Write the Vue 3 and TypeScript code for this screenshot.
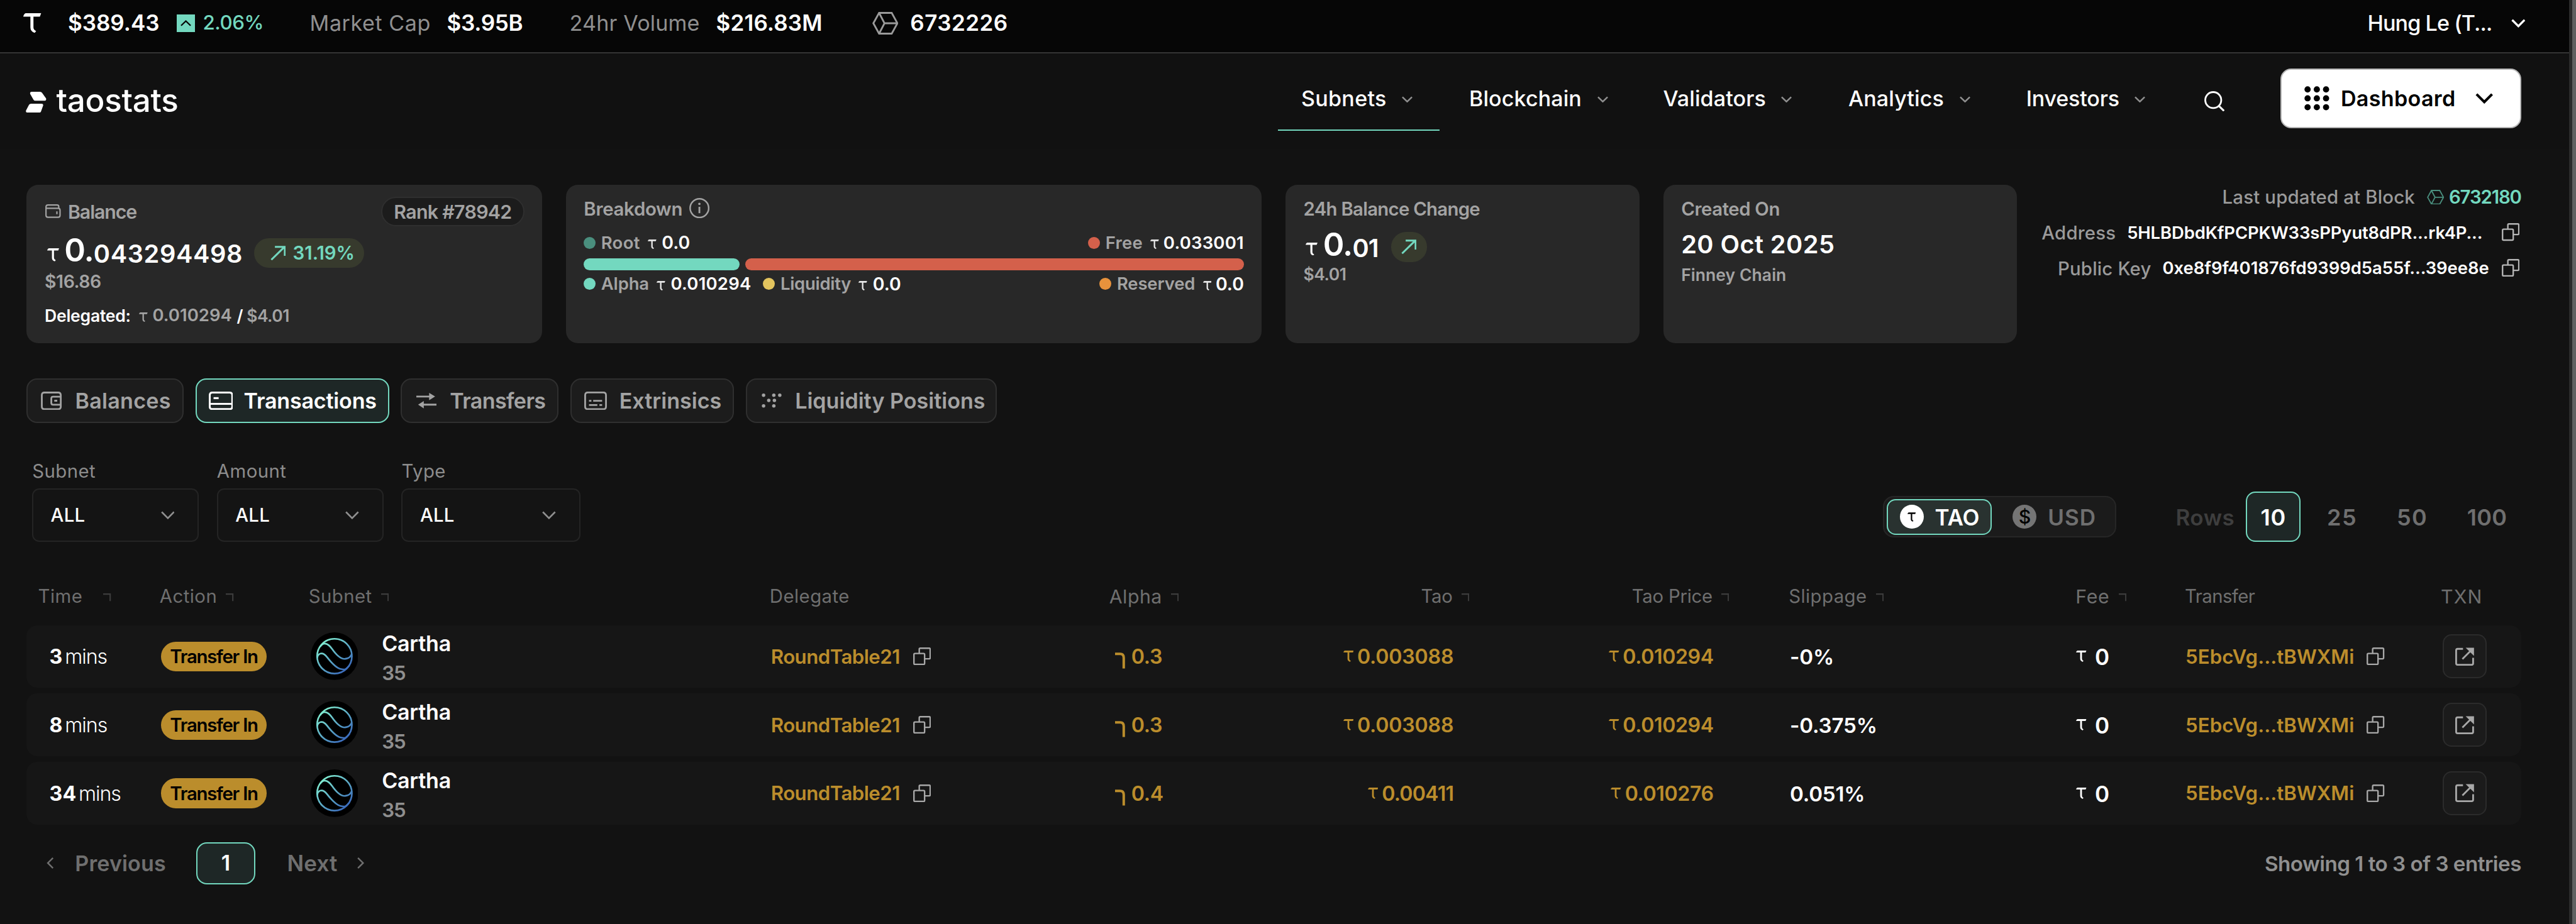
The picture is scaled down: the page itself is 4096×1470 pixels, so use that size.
<script setup lang="ts">
import { h } from 'vue'

interface Glyph { w: number; h: number; body: string }

const line = (d: string, width: number) =>
  `<path d="${d}" fill="none" stroke="currentColor" stroke-width="${width}"/>`

const glyphs: Record<string, Glyph> = {
  tau: { w: 20, h: 22, body: '<path fill="currentColor" d="M2.6 0H20L18.6 3.8H11.4V16Q11.4 18.6 14.4 20L12.8 22Q8 20.4 8 16V3.8H0Q.6.8 2.6 0Z"/>' },
  alpha: { w: 17, h: 27, body: line('M0 2.3H8.5Q14.6 2.3 14.6 9V27', 4.2) },
  sort: { w: 13, h: 13, body: line('M0 1.2H11.8V13', 2.3) },
  up: { w: 18, h: 10, body: line('M1 9.2L9 1.6L17 9.2', 2.4) },
  down: { w: 18, h: 11, body: line('M1 1.4L9 9.2L17 1.4', 2.6) },
  downWide: { w: 23, h: 14, body: line('M1.2 1.6L11.5 12L21.8 1.6', 2.8) },
  downBold: { w: 30, h: 18, body: line('M2 2L15 15L28 2', 4.4) },
  left: { w: 12, h: 19, body: line('M10.8 1L2.2 9.5L10.8 18', 2.6) },
  right: { w: 12, h: 19, body: line('M1.2 1L9.8 9.5L1.2 18', 2.6) },
  cube: { w: 44, h: 38, body: line('M1.8 19L11.4 1.6H32.6L42.2 19L32.6 36.4H11.4ZM11.4 1.6L20.5 19L11.4 36.4M20.5 19H42', 3) },
  logo: { w: 35, h: 35, body: '<path fill="currentColor" d="M10 0H24Q26 0 27.2 1.6L34 11.2Q35 15 31 15H16Q14 15 13 13.4L7.4 3.6Q6.4 0 10 0ZM9 20H26.5Q30 20 29 23.6L25.6 33Q24.8 35 22.5 35H3Q-.6 35 .4 31.4L5.4 22Q6.5 20 9 20Z"/>' },
  search: { w: 34, h: 34, body: '<circle cx="15" cy="15" r="13.4" fill="none" stroke="currentColor" stroke-width="3"/>' + line('M24.6 25L33 33.2', 3.2) },
  dots: { w: 42, h: 41, body: [5.5, 21, 36.5].flatMap(x => [5.5, 20.5, 35.5].map(y => `<circle cx="${x}" cy="${y}" r="5.2" fill="currentColor"/>`)).join('') },
  wallet: { w: 26, h: 23, body: line('M1.2 5V18.5Q1.2 21.8 4.5 21.8H21.5Q24.8 21.8 24.8 18.5V10Q24.8 6.7 21.5 6.7H3Q1.2 6.7 1.2 4.6Q1.2 1.2 4.5 1.2H20Q22.6 1.2 22.6 4V6.7M19.5 12V16.5', 2.3) },
  rise: { w: 26, h: 25, body: line('M1.5 23.5L23.5 2M7.5 1.8H24.2V17', 3.2) },
  info: { w: 34, h: 34, body: '<circle cx="17" cy="17" r="15.6" fill="none" stroke="currentColor" stroke-width="2.6"/><circle cx="17" cy="9.8" r="2" fill="currentColor"/>' + line('M17 14.8V25.5', 3) },
  copy: { w: 30, h: 30, body: line('M3 10.2H17.5Q19.2 10.2 19.2 11.9V26.8Q19.2 28.5 17.5 28.5H3Q1.3 28.5 1.3 26.8V11.9Q1.3 10.2 3 10.2ZM10.2 10.2V3Q10.2 1.3 11.9 1.3H26.9Q28.6 1.3 28.6 3V17.5Q28.6 19.2 26.9 19.2H19.2', 2.5) },
  balances: { w: 35, h: 31, body: line('M6 1.6H29Q33.4 1.6 33.4 6V25Q33.4 29.4 29 29.4H6Q1.6 29.4 1.6 25V6Q1.6 1.6 6 1.6ZM33 8.5H20.5Q17.5 8.5 17.5 11.5V19Q17.5 22 20.5 22H33M22.5 15.3H27.5', 3) },
  card: { w: 41, h: 31, body: line('M6 1.6H35Q39.4 1.6 39.4 6V25Q39.4 29.4 35 29.4H6Q1.6 29.4 1.6 25V6Q1.6 1.6 6 1.6ZM2 20.5H39', 3.2) + line('M8 11H16.5', 3.4) },
  swap: { w: 34, h: 26, body: line('M0 6.2H24M10 19.8H34', 3) + '<path fill="currentColor" d="M21.5 0L31.5 6.2L21.5 12.4ZM12.5 13.6V26L3 19.8Z"/>' },
  list: { w: 38, h: 31, body: line('M6 1.5H32Q36.5 1.5 36.5 6V25Q36.5 29.5 32 29.5H6Q1.5 29.5 1.5 25V6Q1.5 1.5 6 1.5Z', 3) + line('M8 15.5H12M15 15.5H30M8 22.5H22M25.5 22.5H30', 2.8) },
  pool: { w: 34, h: 24, body: [[3.3, 2.9], [20.5, 2.9], [30.5, 2.9], [12, 11.5], [21.5, 11.5], [3.3, 20.8], [20.5, 20.8]].map(([x, y]) => `<circle cx="${x}" cy="${y}" r="2.9" fill="currentColor"/>`).join('') },
  external: { w: 32, h: 31, body: line('M13 2.4H4Q1.5 2.4 1.5 4.9V26.7Q1.5 29.2 4 29.2H27.5Q30 29.2 30 26.7V17.5M12 19.5L26 5.5', 3) + '<path fill="currentColor" d="M17.5 .6H31.5V14.2Z"/>' },
  cartha: {
    w: 80, h: 80,
    body: '<defs><linearGradient id="wave" gradientUnits="userSpaceOnUse" x1="20" y1="18" x2="60" y2="64"><stop offset="0" stop-color="#7fead0"/><stop offset="1" stop-color="#3a69bb"/></linearGradient></defs>' +
      '<circle cx="40" cy="40" r="40" fill="#000"/><g fill="none" stroke="url(#wave)" stroke-width="2.8"><circle cx="40" cy="40" r="29.2"/>' +
      '<path d="M15.8 24.500C21 15.5 29 18 36 28S50 45.5 58 44.5S68.5 38 69 36"/><path d="M11 43C12 35 20 32 27 41S42 59.5 50 61.5S59 62.5 65 55.5"/></g>',
  },
}

const Icon = (props: { name: string }) => {
  const g = glyphs[props.name]
  return h('svg', { width: g.w, height: g.h, viewBox: `0 0 ${g.w} ${g.h}`, innerHTML: g.body })
}
Icon.props = ['name']

const nav = ['Subnets', 'Blockchain', 'Validators', 'Analytics', 'Investors']

const tabs = [
  { label: 'Balances', icon: 'balances' },
  { label: 'Transactions', icon: 'card' },
  { label: 'Transfers', icon: 'swap' },
  { label: 'Extrinsics', icon: 'list' },
  { label: 'Liquidity Positions', icon: 'pool' },
]

const filters = ['Subnet', 'Amount', 'Type']

const columns = [
  { label: 'Time', sort: true }, { label: 'Action', sort: true }, { label: 'Subnet', sort: true },
  { label: 'Delegate', sort: false }, { label: 'Alpha', sort: true }, { label: 'Tao', sort: true },
  { label: 'Tao Price', sort: true }, { label: 'Slippage', sort: true }, { label: 'Fee', sort: true },
  { label: 'Transfer', sort: false }, { label: 'TXN', sort: false },
]
const slug = (s: string) => 'h-' + s.toLowerCase().replace(' ', '-')

const rows = [
  { age: '3', alpha: '0.3', tao: '0.003088', price: '0.010294', slip: '-0%' },
  { age: '8', alpha: '0.3', tao: '0.003088', price: '0.010294', slip: '-0.375%' },
  { age: '34', alpha: '0.4', tao: '0.00411', price: '0.010276', slip: '0.051%' },
]
</script>

<template>
  <div class="page">
    <div class="content">
      <div class="topbar">
        <div class="stats">
          <Icon name="tau" class="brand-tau" />
          <span class="num">$389.43</span>
          <span class="up-box"><Icon name="up" /></span>
          <span class="gain">2.06%</span>
          <span class="muted mcap">Market Cap</span>
          <span class="num n2">$3.95B</span>
          <span class="muted">24hr Volume</span>
          <span class="num n3">$216.83M</span>
          <Icon name="cube" class="cube" />
          <span class="num n4">6732226</span>
        </div>
        <div class="user"><span>Hung Le (T...</span><Icon name="downBold" /></div>
      </div>

      <header class="header">
        <div class="logo"><Icon name="logo" /><span>taostats</span></div>
        <nav class="nav">
          <a v-for="(n, i) in nav" :key="n" class="link" :class="{ on: i === 0 }">{{ n }}<Icon name="down" /></a>
          <Icon name="search" class="search" />
          <button class="dash"><Icon name="dots" /><span>Dashboard</span><Icon name="downBold" /></button>
        </nav>
      </header>

      <section class="cards">
        <div class="card">
          <div class="row r50 first">
            <Icon name="wallet" class="wallet" /><span class="title bal">Balance</span>
            <span class="rank">Rank #78942</span>
          </div>
          <div class="row r50 amount">
            <Icon name="tau" class="tau-b" /><span class="whole">0.</span><span class="frac">043294498</span>
            <span class="chip"><Icon name="rise" />31.19%</span>
          </div>
          <div class="usd">$16.86</div>
          <div class="row delegated">
            <b>Delegated:</b><Icon name="tau" class="tau-s" /><span class="dv">0.010294</span><i>/</i><span class="du">$4.01</span>
          </div>
        </div>

        <div class="card breakdown">
          <div class="row title h40"><span>Breakdown</span><Icon name="info" class="info" /></div>
          <div class="row legend up">
            <span class="item"><i class="dot root" />Root<Icon name="tau" class="tau-s" /><b class="zero">0.0</b></span>
            <span class="item end"><i class="dot free" />Free<Icon name="tau" class="tau-s" /><b>0.033001</b></span>
          </div>
          <div class="bar"><div class="seg alpha" /><div class="seg free" /></div>
          <div class="row legend down">
            <span class="item"><i class="dot alpha" />Alpha<Icon name="tau" class="tau-s" /><b>0.010294</b></span>
            <span class="item liq"><i class="dot liquidity" />Liquidity<Icon name="tau" class="tau-s" /><b class="zero">0.0</b></span>
            <span class="item end"><i class="dot reserved" />Reserved<Icon name="tau" class="tau-s" /><b class="zero">0.0</b></span>
          </div>
        </div>

        <div class="card change">
          <div class="row title h40 t24">24h Balance Change</div>
          <div class="row r50 amount">
            <Icon name="tau" class="tau-b" /><span class="whole">0.</span><span class="frac">01</span>
            <span class="chip round"><Icon name="rise" /></span>
          </div>
          <div class="usd low">$4.01</div>
        </div>

        <div class="card change">
          <div class="row title h40">Created On</div>
          <div class="row date">20 Oct 2025</div>
          <div class="usd chain">Finney Chain</div>
        </div>

        <div class="meta">
          <div class="mrow"><span class="lbl">Last updated at Block</span><Icon name="cube" class="mcube" /><span class="blk">6732180</span></div>
          <div class="mrow"><span class="lbl">Address</span><span class="hash adr">5HLBDbdKfPCPKW33sPPyut8dPR...rk4P...</span><Icon name="copy" class="mcopy far" /></div>
          <div class="mrow"><span class="lbl">Public Key</span><span class="hash key">0xe8f9f401876fd9399d5a55f...39ee8e</span><Icon name="copy" class="mcopy" /></div>
        </div>
      </section>

      <div class="tabs">
        <div v-for="(t, i) in tabs" :key="t.label" class="tab" :class="{ on: i === 1 }">
          <span class="slot"><Icon :name="t.icon" /></span><span class="name" :class="'t' + i">{{ t.label }}</span>
        </div>
      </div>

      <div class="controls">
        <div class="filters">
          <div v-for="f in filters" :key="f" class="filter">
            <label>{{ f }}</label>
            <div class="select"><span>ALL</span><Icon name="downWide" /></div>
          </div>
        </div>
        <div class="right">
          <div class="toggle">
            <div class="opt on"><span class="coin"><Icon name="tau" /></span><span class="name">TAO</span></div>
            <div class="opt"><span class="coin usdc">$</span><span class="name">USD</span></div>
          </div>
          <span class="rows-lbl name">Rows</span>
          <span class="size on">10</span>
          <span class="size">25</span>
          <span class="size">50</span>
          <span class="size">100</span>
        </div>
      </div>

      <div class="thead">
        <div v-for="c in columns" :key="c.label" class="th" :class="slug(c.label)">
          <span>{{ c.label }}</span><Icon v-if="c.sort" name="sort" />
        </div>
      </div>

      <div class="tbody">
        <div v-for="(r, i) in rows" :key="i" class="tr">
          <div class="td time"><b>{{ r.age }}</b><span>mins</span></div>
          <div class="td"><span class="tag">Transfer In</span></div>
          <div class="td subnet"><Icon name="cartha" /><div class="names"><b>Cartha</b><span>35</span></div></div>
          <div class="td gold deleg"><span>RoundTable21</span><Icon name="copy" class="cp" /></div>
          <div class="td gold al"><Icon name="alpha" /><span>{{ r.alpha }}</span></div>
          <div class="td gold tao"><Icon name="tau" class="tau-t" /><span>{{ r.tao }}</span></div>
          <div class="td gold price"><Icon name="tau" class="tau-t" /><span>{{ r.price }}</span></div>
          <div class="td slip"><span>{{ r.slip }}</span></div>
          <div class="td fee"><Icon name="tau" class="tau-t" /><span>0</span></div>
          <div class="td gold trf"><span>5EbcVg...tBWXMi</span><Icon name="copy" class="cp" /></div>
          <div class="td"><div class="ext"><Icon name="external" /></div></div>
        </div>
      </div>

      <div class="pager">
        <div class="pg"><Icon name="left" /><span class="prev">Previous</span><span class="cur">1</span><span class="next">Next</span><Icon name="right" /></div>
        <span class="showing">Showing 1 to 3 of 3 entries</span>
      </div>
    </div>
    <div class="scroll" />
  </div>
</template>

<style>
body { margin: 0; background: #121212; overflow: hidden; }
</style>

<style scoped>
.page {
  zoom: 0.94727;
  width: 4324px;
  height: 1552px;
  display: flex;
  overflow: hidden;
  background: #121212;
  color: #fff;
  font-family: Inter, "Liberation Sans", sans-serif;
  font-size: 36px;
  font-weight: 560;
  line-height: 1;
  white-space: nowrap;
}
.page * { box-sizing: border-box; }
svg { display: block; flex: none; }
b { font-weight: inherit; }
i { font-style: normal; }
.name { padding: 2px 0 0 1px; }
.content { width: 4312px; flex: none; }
.scroll { flex: 1; background: #606060; border-left: 6px solid #2b2b2b; }

.topbar {
  height: 90px;
  padding: 0 73px 10px 39.5px;
  background: #060606;
  border-bottom: 2.2px solid #353535;
  display: flex;
  justify-content: space-between;
  align-items: center;
}
.stats {
  display: grid;
  grid-template-columns: 74.5px 183px 43.5px 178.5px 231px 205px 247px 262px 64px 170px;
  align-items: center;
}
.brand-tau { width: 30px; height: 33px; }
.num { font-size: 37px; letter-spacing: -0.001em; }
.num.n2 { letter-spacing: -0.008em; }
.num.n3 { letter-spacing: 0.004em; }
.num.n4 { letter-spacing: 0.012em; }
.up-box {
  width: 30px;
  height: 30px;
  background: #73d8bf;
  color: #060606;
  display: flex;
  align-items: center;
  justify-content: center;
}
.gain { font-size: 33px; font-weight: 500; color: #73d8bf; letter-spacing: -0.014em; }
.muted { font-weight: 400; color: #8f8f8f; letter-spacing: 0.005em; padding-left: 1px; }
.mcap { letter-spacing: 0.0165em; }
.cube { color: #9a9a9a; }
.user { display: grid; grid-template-columns: 241px 24px; align-items: center; font-weight: 500; letter-spacing: -0.0267em; }
.user svg { width: 24px; height: 15px; }

.header {
  height: 160px;
  padding: 0 80px 9px 43.5px;
  background: #111;
  display: flex;
  justify-content: space-between;
  align-items: center;
}
.logo { display: flex; align-items: center; padding-top: 6px; gap: 16px; font-size: 54px; font-weight: 500; letter-spacing: -0.006em; }
.logo svg { margin-top: 6px; }
.nav { display: grid; grid-template-columns: 282px 325.6px 311px 298.4px 338px 128px 404px; align-items: center; }
.link {
  height: 109px;
  padding-left: 39px;
  display: flex;
  align-items: center;
  gap: 26px;
  border: solid transparent;
  border-width: 2.2px 0;
  font-weight: 500;
  letter-spacing: 0.002em;
}
.link:nth-child(5) { letter-spacing: -0.006em; }
.link svg { color: #8f8f8f; margin-top: 3px; }
.link.on { width: 271px; border-bottom-color: #73d8bf; letter-spacing: 0.0083em; }
.search { margin-top: 9px; }
.dash {
  height: 100px;
  padding: 0 0 0 38px;
  background: #fff;
  border: 2.2px solid #b5b5b5;
  border-radius: 18px;
  display: flex;
  align-items: center;
  font: inherit;
  font-weight: 600;
  letter-spacing: 0.009em;
  color: #000;
}
.dash span { margin: 0 33px 0 19px; }

.cards {
  margin-top: 60px;
  padding: 0 80px 0 44px;
  display: grid;
  grid-template-columns: 866px 1168px 594px 594px 1fr;
  gap: 40px;
}
.card { height: 266px; background: #282828; border-radius: 20px; color: #a3a3a3; padding: 20px 30px 0 31px; }
.row { display: flex; align-items: center; }
.r50 { height: 50px; }
.wallet { margin-left: 1px; }
.title { font-size: 31px; letter-spacing: -0.009em; padding-top: 2px; }
.bal { font-size: 32px; letter-spacing: -0.036em; margin-left: 12px; }
.rank {
  margin-left: auto;
  width: 240px;
  height: 50px;
  padding-top: 1px;
  border-radius: 25px;
  border: 2.2px solid #2f2f2f;
  background: #1c1c1c;
  display: flex;
  align-items: center;
  justify-content: center;
  font-size: 32px;
  letter-spacing: -0.0228em;
}
.amount { margin-top: 20px; color: #fff; font-size: 42px; }
.tau-b { width: 20px; height: 22px; margin: 6px 0 0 4px; }
.whole { font-size: 54px; margin: 0 0 10px 9px; letter-spacing: -0.02em; }
.frac { letter-spacing: 0.0142em; margin-top: 3px; }
.chip {
  width: 185px;
  height: 50px;
  margin-left: 19px;
  padding-left: 27px;
  border-radius: 25px;
  background: #373a2d;
  color: #73d8bf;
  display: flex;
  align-items: center;
  gap: 12px;
  font-size: 31px;
  letter-spacing: 0;
}
.chip.round { width: 60px; margin-left: 21px; padding-left: 17px; }
.usd { font-size: 30px; letter-spacing: -0.0154em; margin-top: 8px; }
.delegated { margin-top: 27px; font-size: 28px; height: 30px; }
.delegated b { color: #fff; letter-spacing: -0.0085em; }
.delegated i { color: #fff; margin: 0 6px 0 8px; font-weight: 600; }
.tau-s { width: 14.5px; height: 16px; margin-top: 6px; }
.delegated .tau-s { margin-left: 14px; margin-right: 8px; }
.dv { font-size: 29px; letter-spacing: 0.0016em; }
.du { letter-spacing: -0.0216em; }

.breakdown { padding-left: 30px; }
.h40 { height: 40px; }
.info { margin: -2px 0 0 11px; }
.legend { font-size: 29px; height: 28px; color: #a3a3a3; letter-spacing: 0.011em; }
.legend.up { margin-top: 24px; }
.item { display: flex; align-items: center; }
.item.end { margin-left: auto; }
.item .tau-s { color: #e6e6e6; margin-left: 13px; margin-right: 9px; margin-top: 5px; }
.item.end .tau-s { margin-right: 7px; }
.item b { color: #fff; letter-spacing: 0.008em; }
.item b.zero { font-size: 30px; letter-spacing: 0; }
.legend.down { letter-spacing: -0.005em; }
.liq { margin-left: 20px; letter-spacing: -0.0096em; }
.dot { width: 20px; height: 20px; border-radius: 50%; margin-right: 9px; flex: none; }
.dot.root { background: #4a8f7e; }
.dot.free, .seg.free { background: #d4604b; }
.dot.alpha, .seg.alpha { background: #73d8bf; }
.dot.liquidity { background: #e3c45e; }
.dot.reserved { background: #e8923c; }
.bar { display: flex; gap: 10px; margin: 12px 0 9px; height: 20px; }
.seg { border-radius: 10px; }
.seg.alpha { width: 261px; }
.seg.free { width: 837px; }

.change { padding-left: 30px; }
.change .title { letter-spacing: -0.0138em; }
.change .t24 { letter-spacing: -0.0248em; }
.change .amount { margin-top: 20px; }
.change .frac { letter-spacing: -0.02em; }
.low { margin-top: 7px; letter-spacing: -0.02em; font-size: 28px; }
.date { height: 40px; margin-top: 21px; font-size: 42px; letter-spacing: 0.0104em; color: #fff; }
.chain { font-size: 28px; margin-top: 17px; letter-spacing: 0.002em; }

.meta { margin-top: -9px; }
.mrow { height: 60px; display: flex; align-items: center; justify-content: flex-end; font-size: 31px; }
.lbl { color: #9a9a9a; letter-spacing: 0.006em; font-weight: 500; }
.mcube { width: 29px; height: 25px; color: #4a8f7e; margin: 0 8px 0 20px; }
.blk { color: #73d8bf; letter-spacing: -0.0382em; }
.hash { font-size: 29px; margin-left: 19px; }
.adr { letter-spacing: -0.0053em; }
.key { letter-spacing: -0.0019em; }
.mcopy { color: #b5b5b5; margin: -2px 3px 0 21px; }
.mcopy.far { margin-left: 32px; }

.tabs { margin: 60px 0 0 44px; display: flex; gap: 20px; }
.tab {
  height: 74px;
  border: 2.2px solid #2f2f2f;
  border-radius: 18px;
  background: #1c1c1c;
  color: #a3a3a3;
  display: flex;
  align-items: center;
  padding-left: 20px;
}
.tab:nth-child(1) { width: 264px; }
.tab:nth-child(2) { width: 325px; }
.tab:nth-child(3) { width: 264.5px; }
.tab:nth-child(4) { width: 275px; }
.tab:nth-child(5) { width: 421px; }
.tab.on { background: #1e2726; border-color: #73d8bf; color: #fff; font-weight: 600; }
.slot { width: 41px; margin-right: 18px; display: flex; justify-content: center; }
.t0 { letter-spacing: 0.0076em; }
.t1 { letter-spacing: -0.0058em; padding-left: 0; }
.t2 { letter-spacing: -0.0184em; }
.t3 { letter-spacing: 0; }
.t4 { letter-spacing: 0; }

.controls { margin-top: 60px; height: 140px; padding: 0 80px 0 54px; display: flex; justify-content: space-between; align-items: flex-end; }
.filters { display: grid; grid-template-columns: 280px 280px 300px; gap: 30px; }
.filter label { display: block; height: 49px; font-size: 31px; line-height: 42px; font-weight: 400; color: #8c8c8c; letter-spacing: 0.015em; }
.select {
  height: 90px;
  padding: 0 39px 0 29px;
  border: 2.2px solid #242424;
  border-radius: 12px;
  background: #141414;
  display: flex;
  align-items: center;
  justify-content: space-between;
  font-size: 31px;
  font-weight: 500;
  letter-spacing: 0.008em;
}
.select svg { color: #8f8f8f; }
.right { height: 84px; display: grid; grid-template-columns: 490.5px 119px 136px 117px 118px 91px; align-items: center; color: #6f6f6f; font-weight: 600; }
.toggle { width: 392px; height: 70px; border: 2.2px solid #262626; border-radius: 18px; background: #1b1b1b; display: flex; align-items: center; padding-left: 4px; font-size: 37px; }
.opt { height: 60px; display: flex; align-items: center; letter-spacing: 0.025em; padding-left: 35px; }
.opt.on { width: 177px; padding-left: 20px; border: 2.2px solid #73d8bf; border-radius: 15px; background: #293230; color: #fff; letter-spacing: -0.001em; }
.coin { width: 40px; height: 40px; border-radius: 50%; background: #fff; color: #000; display: flex; align-items: center; justify-content: center; margin-right: 18px; }
.coin svg { width: 14px; height: 16px; }
.usdc { background: #757575; font-size: 32px; font-weight: 500; letter-spacing: 0; }
.rows-lbl { color: #3e3e3e; font-size: 37px; letter-spacing: 0.014em; }
.size { font-size: 38px; letter-spacing: 0.04em; padding-top: 1px; }
.size:last-child { letter-spacing: 0.01em; }
.size.on { width: 92px; height: 84px; border: 2.2px solid #73d8bf; border-radius: 16px; background: #1e2726; color: #fff; display: flex; align-items: center; justify-content: center; letter-spacing: 0.02em; }

.thead, .tr { display: grid; grid-template-columns: 223px 250px 773px 570px 320px 260px 561.5px 481.5px 183.5px 429.5px 136px; align-items: center; }
.thead { margin: 76px 36px 33px 45px; height: 31px; font-size: 31px; font-weight: 400; color: #6f6f6f; letter-spacing: 0.015em; }
.th { display: flex; align-items: center; gap: 15px; }
.th svg { color: #3c3c3c; margin-top: 3px; }
.h-time { padding-left: 19px; gap: 35px; }
.h-delegate { padding-left: 1px; }
.h-alpha { padding-left: 1px; font-size: 32px; }
.h-tao { justify-content: flex-end; margin-right: -25px; letter-spacing: -0.0118em; }
.h-tao-price { justify-content: flex-end; padding-right: 100px; letter-spacing: -0.0086em; }
.h-fee { font-size: 32px; letter-spacing: 0.025em; }
.h-transfer { letter-spacing: -0.02em; }
.h-txn { font-size: 32px; letter-spacing: 0.039em; }

.tbody { margin: 0 80px 0 44px; display: grid; gap: 10px; }
.tr { height: 105px; background: #161616; border-radius: 18px; font-size: 34px; }
.td { display: flex; align-items: center; }
.td > span { padding-top: 2px; }
.time { padding-left: 39px; }
.time b { font-weight: 650; padding-top: 2px; }
.time span { font-weight: 300; letter-spacing: -0.0332em; margin-left: 4px; }
.td > .tag {
  width: 178px;
  height: 50px;
  margin-left: 3px;
  padding-top: 1px;
  border-radius: 25px;
  background: #bb8d2c;
  color: #000;
  display: flex;
  align-items: center;
  justify-content: center;
  font-size: 31px;
  letter-spacing: -0.043em;
}
.subnet { padding-left: 4px; gap: 40px; }
.names { display: flex; flex-direction: column; gap: 16px; padding-top: 6px; }
.names b { font-size: 36px; font-weight: 600; letter-spacing: -0.008em; }
.names span { font-size: 33px; color: #8f8f8f; letter-spacing: -0.03em; }
.gold { color: #bb8d2c; }
.deleg { padding-left: 4px; font-size: 33px; letter-spacing: -0.0182em; }
.cp { color: #a8a8a8; margin-left: 22px; }
.al { padding-left: 12px; gap: 10px; letter-spacing: -0.01em; }
.al svg { margin-top: 14px; }
.tao { justify-content: flex-end; letter-spacing: -0.007em; }
.tr:last-child .tao { letter-spacing: -0.025em; }
.tau-t { width: 17.5px; height: 19px; margin: 0 6px 0 0; }
.price { justify-content: flex-end; padding-right: 125px; letter-spacing: -0.013em; }
.slip { padding-left: 3px; font-size: 35px; font-weight: 600; letter-spacing: -0.006em; }
.fee { padding-left: 2px; font-size: 37px; }
.fee .tau-t { margin-right: 14px; }
.trf { padding-left: 2px; font-size: 33px; letter-spacing: 0.001em; }
.trf .cp { margin-left: 21px; }
.ext { width: 74px; height: 74px; margin-left: 4px; border: 2.2px solid #2b2b2b; border-radius: 15px; background: #1b1b1b; color: #a8a8a8; display: flex; align-items: center; justify-content: center; }

.pager { margin: 30px 80px 0 44px; height: 70px; display: flex; justify-content: space-between; align-items: center; color: #6f6f6f; }
.pg { display: grid; grid-template-columns: 47.5px 203px 153px 118px 12px; align-items: center; padding-left: 34.5px; }
.prev { letter-spacing: 0.003em; padding-top: 2px; }
.next { font-size: 37px; letter-spacing: 0.004em; padding-top: 1px; }
.cur { width: 100px; height: 70px; border: 2.2px solid #73d8bf; border-radius: 18px; background: #1e2726; color: #fff; display: flex; align-items: center; justify-content: center; }
.showing { color: #8f8f8f; font-size: 35px; letter-spacing: -0.0152em; padding-top: 2px; }
</style>
